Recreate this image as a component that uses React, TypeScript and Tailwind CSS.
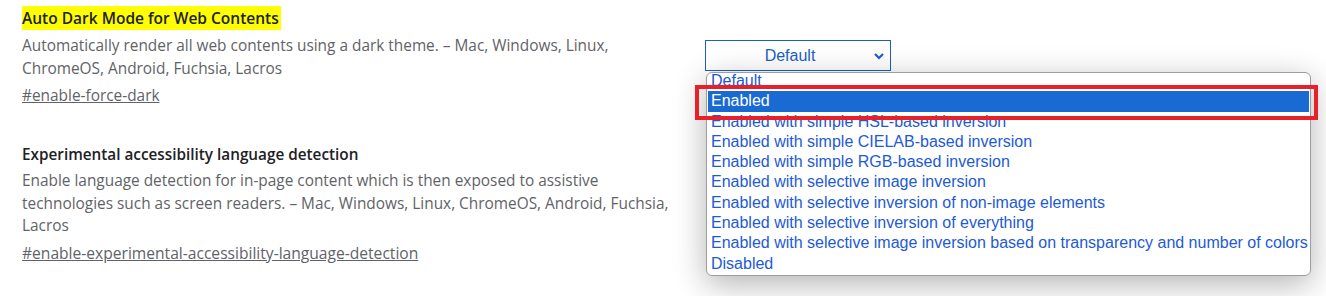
import React from "react";

const options = [
  "Default",
  "Enabled",
  "Enabled with simple HSL-based inversion",
  "Enabled with simple CIELAB-based inversion",
  "Enabled with simple RGB-based inversion",
  "Enabled with selective image inversion",
  "Enabled with selective inversion of non-image elements",
  "Enabled with selective inversion of everything",
  "Enabled with selective image inversion based on transparency and number of colors",
  "Disabled",
];

export default function App() {
  return (
    <div className="relative w-[1326px] h-[296px] overflow-hidden bg-white" style={{ fontFamily: '"Open Sans", "Noto Sans", sans-serif' }}>
      <div className="pl-[22px] pt-[6px]">
        {/* Row 1 */}
        <div className="flex">
          <div className="w-[683px]">
            <div className="h-[24px] flex items-center">
              <span className="bg-[#ffff00] text-[15.5px] font-semibold text-[#202124] leading-[24px] pr-[2px]">
                Auto Dark Mode for Web Contents
              </span>
            </div>
            <p className="mt-[4px] text-[15.4px] leading-[23px] text-[#5f6368] w-[620px]">
              Automatically render all web contents using a dark theme. – Mac, Windows, Linux, ChromeOS, Android, Fuchsia, Lacros
            </p>
            <a className="block mt-[4px] text-[15.4px] leading-[23px] text-[#5f6368] underline">#enable-force-dark</a>
          </div>
          <div className="pt-[34px]">
            <div
              className="w-[186px] h-[31px] border border-[#1a5fc8] flex items-center justify-center relative text-[#1a5fc8] text-[16px]"
              style={{ fontFamily: '"Liberation Sans", Arial, sans-serif' }}
            >
              <span className="mr-[16px]">Default</span>
              <svg className="absolute right-[5px] top-[10px]" width="12" height="10" viewBox="0 0 12 10">
                <path d="M2 3 L6 7 L10 3" fill="none" stroke="#1a5fc8" strokeWidth="2.2" />
              </svg>
            </div>
          </div>
        </div>

        {/* Row 2 */}
        <div className="mt-[35px] w-[683px]">
          <div className="text-[15.3px] font-semibold text-[#202124] leading-[24px]">Experimental accessibility language detection</div>
          <p className="mt-[4px] text-[15.4px] leading-[22.5px] text-[#5f6368] w-[656px]">
            Enable language detection for in-page content which is then exposed to assistive technologies such as screen readers. – Mac, Windows, Linux, ChromeOS, Android, Fuchsia, Lacros
          </p>
          <a className="block mt-[4px] text-[15.6px] leading-[23px] text-[#5f6368] underline">#enable-experimental-accessibility-language-detection</a>
        </div>
      </div>

      {/* Dropdown popup */}
      <div
        className="absolute left-[706px] top-[72px] w-[605px] h-[204px] bg-white border border-[#9e9e9e] rounded-[6px] shadow-[0_8px_32px_rgba(0,0,0,0.3)] overflow-hidden"
        style={{ fontFamily: '"Liberation Sans", Arial, sans-serif' }}
      >
        <div className="-mt-[2px]">
          {options.map((o, i) => (
            <div
              key={o}
              className={
                i === 1
                  ? "h-[20.3px] leading-[20px] pl-[3px] text-[16px] bg-[#1a6ad4] text-white mx-[1px]"
                  : "h-[20.3px] leading-[20px] pl-[3px] text-[16px] text-[#1d5ad6] mx-[1px]"
              }
            >
              {o}
            </div>
          ))}
        </div>
      </div>

      {/* Red annotation box */}
      <div className="absolute left-[695px] top-[85px] w-[623px] h-[35px] border-[4px] border-[#e8202a]" />
    </div>
  );
}
